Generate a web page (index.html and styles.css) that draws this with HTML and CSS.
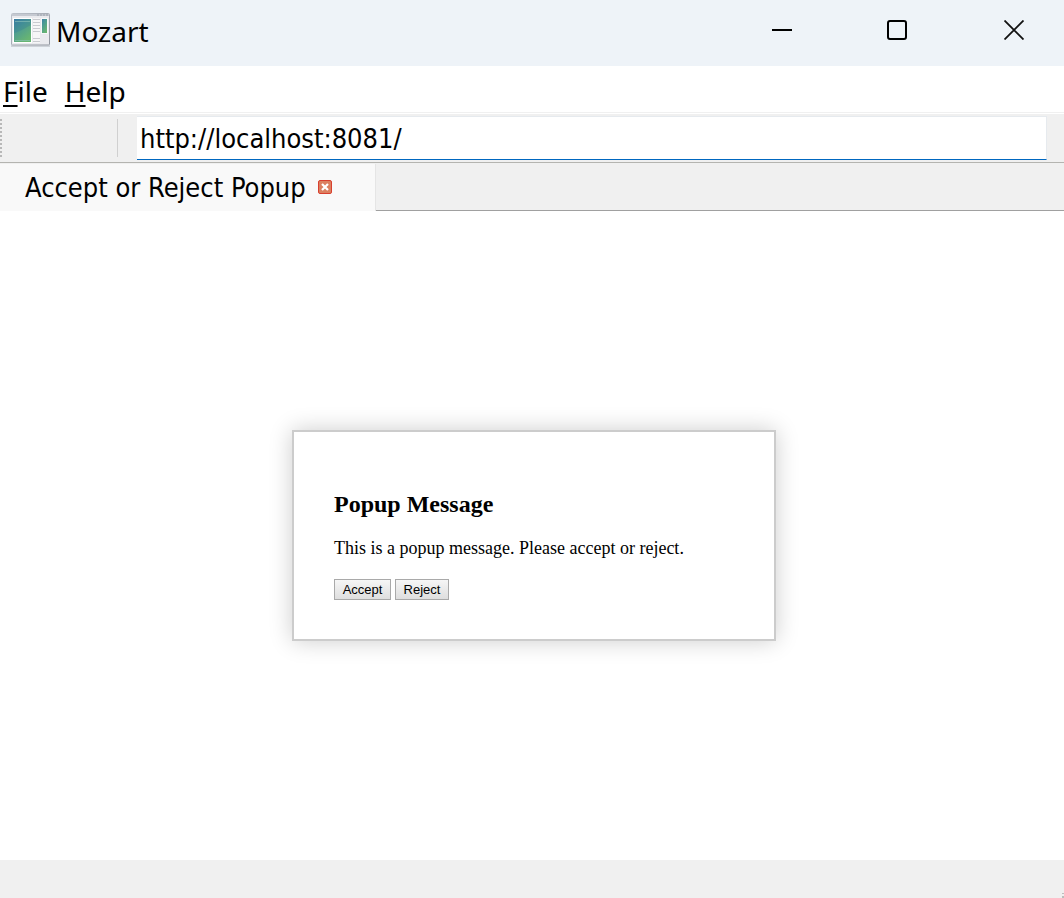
FILE: index.html
```html
<!DOCTYPE html>
<html lang="en">
<head>
<meta charset="utf-8">
<title>Mozart</title>
<link rel="stylesheet" href="styles.css">
</head>
<body>
<div class="window">
  <header class="titlebar">
    <svg class="app-icon" width="40" height="34" viewBox="0 0 40 34" aria-hidden="true">
      <defs>
        <linearGradient id="pane" x1="0" y1="0" x2="0.6" y2="1">
          <stop offset="0" stop-color="#3d7fa6"/><stop offset="0.4" stop-color="#4b9a94"/><stop offset="1" stop-color="#68b572"/>
        </linearGradient>
        <linearGradient id="frame" x1="0" y1="0" x2="1" y2="1">
          <stop offset="0" stop-color="#bcc2cb"/><stop offset="1" stop-color="#8f949d"/>
        </linearGradient>
      </defs>
      <rect x="0.5" y="0.5" width="38" height="31.5" rx="1" fill="#e9eaee" stroke="url(#frame)"/>
      <path d="M1 2h37" stroke="#c5c9d1" stroke-width="2"/>
      <path d="M26 2h11" stroke="#9aa0aa" stroke-dasharray="2 1"/>
      <rect x="2" y="5" width="19" height="25" fill="#fff"/>
      <rect x="3" y="6" width="17" height="23" fill="url(#pane)"/>
      <path d="M3 20C9 19 15 14 20 12V6H3Z" fill="#2b7096" opacity=".25"/>
      <path d="M4 8.500h15M4 27.500h15" stroke="#8fc5bb" opacity=".6"/>
      <path d="M22 5h7v25h-7z" fill="#f6f6f7"/>
      <path d="M22 6.500h7M22 9.500h7M22 12.500h7M22 15.500h7M22 18.500h7M22 25.500h7M22 28.500h7" stroke="#c9cbd0"/>
      <rect x="30" y="5" width="7" height="16" fill="#f8f8f8"/>
      <rect x="31" y="6" width="5" height="14" fill="url(#pane)"/>
      <path d="M0 33h39" stroke="#aeb3ba"/>
    </svg>
    <h1 class="title">Mozart</h1>
    <div class="controls">
      <button class="control" type="button" aria-label="Minimize">
        <svg width="20" height="20" viewBox="0 0 20 20"><path d="M0 10h20" stroke="#000" stroke-width="2"/></svg>
      </button>
      <button class="control" type="button" aria-label="Maximize">
        <svg width="20" height="20" viewBox="0 0 20 20"><rect x="1" y="1" width="18" height="18" rx="2" fill="none" stroke="#000" stroke-width="2"/></svg>
      </button>
      <button class="control" type="button" aria-label="Close">
        <svg width="20" height="20" viewBox="0 0 20 20"><path d="M0.500 0.500l19 19M19.500 0.500l-19 19" stroke="#111" stroke-width="1.800"/></svg>
      </button>
    </div>
  </header>
  <nav class="menubar">
    <button class="menu" type="button"><u>F</u>ile</button>
    <button class="menu" type="button"><u>H</u>elp</button>
  </nav>
  <div class="toolbar">
    <span class="grip"></span>
    <span class="divider"></span>
    <input class="address" type="text" aria-label="Address" value="http://localhost:8081/">
  </div>
  <div class="tabs">
    <div class="tab">
      <span>Accept or Reject Popup</span>
      <button class="tab-close" type="button" aria-label="Close tab">
        <svg width="14" height="14" viewBox="0 0 14 14"><rect x="0.500" y="0.500" width="13" height="13" rx="1.500" fill="#dc8060" stroke="#d8402f"/><path d="M4 4l6 6M10 4l-6 6" stroke="#fff" stroke-width="2.200"/></svg>
      </button>
    </div>
  </div>
  <main class="page">
    <section class="popup">
      <h2 class="popup-title">Popup Message</h2>
      <p class="popup-text">This is a popup message. Please accept or reject.</p>
      <div class="actions">
        <button class="action" type="button">Accept</button>
        <button class="action" type="button">Reject</button>
      </div>
    </section>
  </main>
  <footer class="statusbar"><span class="resize"></span></footer>
</div>
</body>
</html>
```

FILE: styles.css
```css
* { box-sizing: border-box; }
body { margin: 0; color: #000; background: #fff; font-family: "Noto Sans", "Open Sans", sans-serif; }
button { margin: 0; padding: 0; border: 0; background: none; color: inherit; font: inherit; }
svg { display: block; }
.window { display: flex; flex-direction: column; min-height: 100vh; }
.titlebar { display: flex; align-items: center; height: 66px; padding: 0 0 4px 11px; background: #eef3f8; }
.app-icon { margin-bottom: 2px; }
.title { margin: 0 0 0 5px; font-size: 28px; font-weight: 400; line-height: 40px; }
.controls { display: flex; margin-left: auto; padding-bottom: 2px; }
.control { display: grid; place-items: center; width: 115px; height: 58px; }
.control:last-child { width: 100px; margin-left: 10px; }
.menubar { display: flex; gap: 17px; height: 47px; padding: 3px 3px 0; border-bottom: 1px solid #f0f0f0; }
.menu { font-size: 28px; line-height: 40px; }
.menu u { text-decoration-thickness: 2px; text-underline-offset: 3px; text-decoration-skip-ink: none; }
.toolbar { display: flex; height: 50px; padding: 2px 17px 2px 0; border-top: 1px solid #fff; border-bottom: 1px solid #b4b4b0; background: #f0f0f0; }
.grip { width: 2px; margin: 3px 0; background: repeating-linear-gradient(#b8b8b8 0 2px, #f0f0f0 2px 4px); }
.divider { width: 1px; margin: 3px 19px 3px 115px; background: #d0d0d0; }
.address { flex: 1; min-width: 0; height: 44px; padding: 0 3px; border: 1px solid #e6eaee; border-width: 1px 1px 1px 0; border-bottom-color: #0067c0; border-radius: 0; outline: 0; background: #fff; color: #000; font: 27px/40px "DejaVu Sans Condensed", "DejaVu Sans", sans-serif; }
.tabs { display: flex; height: 48px; background: linear-gradient(#a0a0a0, #a0a0a0) bottom / 100% 1px no-repeat #f0f0f0; }
.tab { display: flex; align-items: center; gap: 12px; margin-top: 1px; padding: 0 43px 0 25px; border-right: 1px solid #e5e5e5; background: #f9f9f9; font: 27px/46px "DejaVu Sans Condensed", "DejaVu Sans", sans-serif; white-space: nowrap; }
.tab-close { padding-bottom: 2px; }
.page { display: grid; flex: 1; place-items: center; padding: 24px 0 24px 4px; }
.popup { width: 484px; max-width: 100%; padding: 59px 40px 39px; border: 2px solid #ccc; background: #fff; box-shadow: 0 0 22px rgba(0, 0, 0, .2); font-family: "Liberation Serif", serif; }
.popup-title { margin: 0 0 20px; font-size: 24px; line-height: 27px; }
.popup-text { margin: 0 0 21px; font-size: 18px; line-height: 20px; }
.actions { display: flex; gap: 4px; }
.action { height: 21px; padding: 1px 7px 0; border: 1px solid #a9a9a9; background: linear-gradient(#f6f6f6, #dedede); font: 13px/18px "Liberation Sans", Arial, sans-serif; min-width: 54px; }
.action:first-child { min-width: 57px; }
.statusbar { display: flex; justify-content: flex-end; align-items: flex-end; height: 38px; background: #f0f0f0; }
.resize { width: 2px; height: 5px; border: solid #bdbdbd; border-width: 1px 0 2px; }
```
